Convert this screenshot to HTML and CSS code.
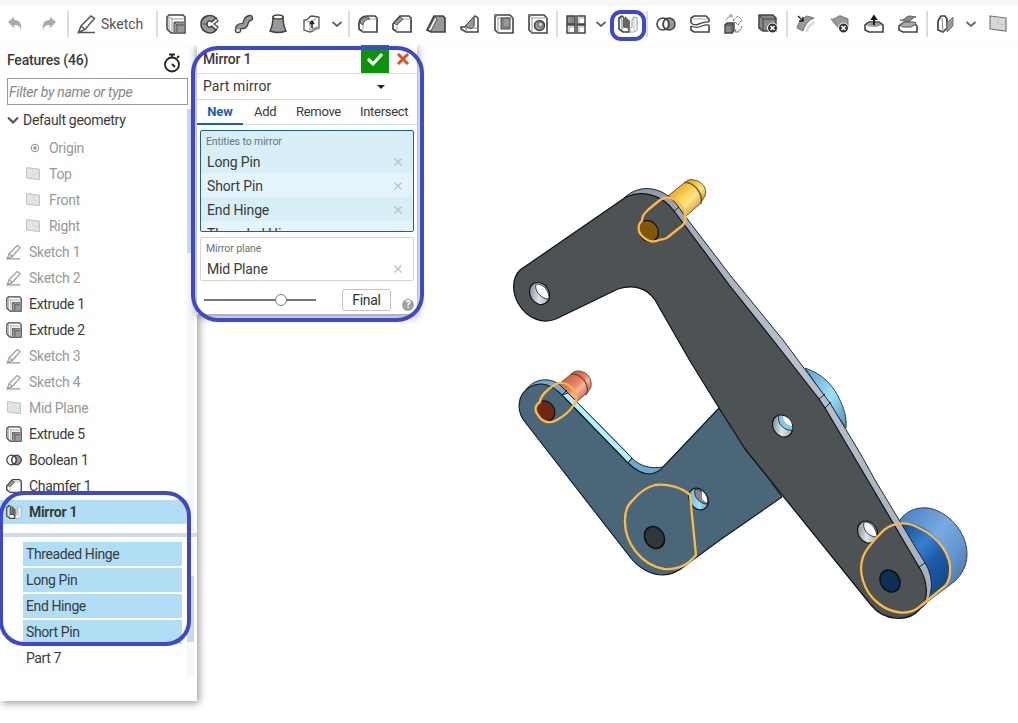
FILE: index.html
```html
<!DOCTYPE html>
<html lang="en">
<head>
<meta charset="utf-8">
<title>Part Studio</title>
<link rel="stylesheet" href="styles.css">
</head>
<body>
<svg class="defs" aria-hidden="true">
  <defs>
    <linearGradient id="gold" x1="0" y1="0" x2="1" y2="1"><stop offset=".1" stop-color="#d99a22"/><stop offset=".45" stop-color="#ffd458"/><stop offset=".6" stop-color="#ffe38a"/><stop offset=".9" stop-color="#c98f20"/></linearGradient>
    <linearGradient id="coral" x1="0" y1="0" x2="1" y2="1"><stop offset=".1" stop-color="#b95c42"/><stop offset=".5" stop-color="#ec886b"/><stop offset=".62" stop-color="#ffb49c"/><stop offset=".9" stop-color="#b55a42"/></linearGradient>
    <linearGradient id="blue" x1="0" y1="0" x2="1" y2="1"><stop offset="0" stop-color="#477dbd"/><stop offset=".42" stop-color="#78a9e2"/><stop offset=".65" stop-color="#6496d0"/><stop offset="1" stop-color="#3e6595"/></linearGradient>
    <linearGradient id="deep" x1="0" y1="0" x2=".7" y2="1"><stop offset="0" stop-color="#134a8d"/><stop offset=".4" stop-color="#377fce"/><stop offset=".65" stop-color="#1c5ca8"/><stop offset="1" stop-color="#134a86"/></linearGradient>
    <linearGradient id="cyan" x1="0" y1="0" x2="1" y2="1"><stop offset="0" stop-color="#5a9cc8"/><stop offset=".55" stop-color="#9be3fb"/><stop offset="1" stop-color="#508bb4"/></linearGradient>
    <linearGradient id="steel" x1="0" y1="0" x2="1" y2="1"><stop offset="0" stop-color="#667078"/><stop offset=".5" stop-color="#dbe3ec"/><stop offset="1" stop-color="#8c98a5"/></linearGradient>
    <linearGradient id="edge" x1="0" y1="0" x2="0" y2="1"><stop offset="0" stop-color="#8f9aa6"/><stop offset=".08" stop-color="#a2adb9"/><stop offset=".4" stop-color="#b8c1cc"/><stop offset="1" stop-color="#a4afbb"/></linearGradient>
    <symbol id="i-extrude" viewBox="0 0 20 20"><path d="M1 3 3 1h14l2 2v16H5l-4-4z" fill="#fff"/><path d="M8 8h10v10H8z" fill="#999"/><path d="M6 5v13M3 3v14M3 3l3 2h13" stroke="#999"/><path d="M8 18V8h10M8 8l3 3v7M11 11h7" stroke="#555"/><path d="M1 3 3 1h14l2 2v16H5l-4-4z" stroke="#444" stroke-width="1.500"/></symbol>
    <symbol id="i-sketch" viewBox="0 0 20 20"><path d="M1.500 18.500 4 12 14 2l3.500 2.500L8 15.500zM4 12l4 3.500M2 18.500h16" stroke="currentColor" stroke-width="1.500"/></symbol>
    <symbol id="i-plane" viewBox="0 0 20 20"><path d="m2 2 16 2v13L2 15z" fill="#d8d8d8" stroke="currentColor" stroke-width="1.200"/><path d="M10 3v7l8 1" stroke="#c4c4c4"/></symbol>
    <symbol id="i-bool" viewBox="0 0 20 20"><circle cx="13" cy="10" r="6" fill="#999" stroke="#444" stroke-width="1.600"/><circle cx="7" cy="10" r="6" stroke="#444" stroke-width="1.600"/><path d="M10 5a6 6 0 0 1 0 10 6 6 0 0 1 0-10" fill="#fff" stroke="#444" stroke-width="1.400"/></symbol>
    <symbol id="i-chamfer" viewBox="0 0 20 20"><path d="M1 10 8 2h9l2 2v14H5l-4-3z" fill="#fff" stroke="#444" stroke-width="1.700"/><path d="m2 9 6-6 3 2-6 6z" fill="#999" stroke="#555"/><path d="M5 11v7M11 5h8" stroke="#aaa"/></symbol>
    <symbol id="i-mirror" viewBox="0 0 20 20"><path d="M1 4 4 2l2 2v9h3l2 2v3H5l-4-3z" fill="#fff" stroke="#444" stroke-width="1.600"/><path d="M4 5v12M1 4l3 1" stroke="#777"/><path d="m7 2 5 5v9l-5-4z" fill="#666"/><path d="M14 13V6l2-3 3 1v12l-3 2h-4v-4z" fill="#fff" stroke="#aaa" stroke-width="1.200"/><path d="M16 5v11" stroke="#bbb"/></symbol>
    <symbol id="i-chev" viewBox="0 0 14 14"><path d="m2.500 5 4.500 4 4.500-4" stroke="#666" stroke-width="1.800"/></symbol>
    <symbol id="i-x" viewBox="0 0 10 10"><path d="m1.500 1.500 7 7M8.500 1.500l-7 7" stroke="#b9c1c5" stroke-width="1.200"/></symbol>
  </defs>
</svg>

<svg class="viewport" viewBox="0 0 1018 723" stroke-linejoin="round" role="img" aria-label="Clamp model">
  <!-- pins and roller behind the plates -->
  <g stroke="#564923" stroke-width=".9">
    <path d="M684 184q4-6 10-4c8 1 14 9 11 16l-5 8z" fill="url(#gold)"/>
    <path d="m668 196 16-13c9-2 20 9 17 20l-15 13z" fill="url(#gold)"/>
    <path d="M684 182c9 0 19 11 17 22"/>
  </g>
  <g stroke="#704437" stroke-width=".9">
    <path d="M571 374q5-5 12-2c6 2 9 8 8 15l-5 8z" fill="url(#coral)"/>
    <path d="m558 385 12-10c9-4 20 7 17 18l-12 10z" fill="url(#coral)"/>
    <path d="M571 374c9 0 18 9 16 19"/>
  </g>
  <path d="M899 521c8-11 18-14 29-13 20 3 39 24 39 46 0 12-5 20-12 27l-28 21z" fill="url(#blue)" stroke="#374556"/>
  <path d="M900 523c14-2 30 6 39 18 11 14 14 30 8 42l-16 14z" fill="url(#deep)"/>
  <path d="M805 368c18 6 27 17 33 28 6 12 9 21 8 32z" fill="url(#cyan)" stroke="#27485c"/>

  <!-- lower plate -->
  <path d="M526 390c8-12 24-13 34-5l8 8 64 65c8 9 21 11 31 9l-10 10-35-10-70-71z" fill="#6faacd" stroke="#1b2a33"/>
  <path d="m568 393 64 65-4 5-66-68z" fill="#b3f1ff" stroke="#1b2a33"/>
  <path d="M530 387c11-7 23-1 32 8l66 68c8 8 14 11 22 11 6-1 10-3 13-7l56-59 63 89-62 43-34 25c-7 6-14 10-23 10-11 0-24-6-33-18L525 422c-9-11-8-28 5-35z" fill="#496779" stroke="#12191d" stroke-width="1.100"/>

  <!-- upper plate -->
  <path d="M624 198c17-16 43-12 58 14l48 63 53 65 47 63 30 50 15 27 50 83c9 14 8 32 0 42l-9 7-250-400z" fill="url(#edge)" stroke="#20252a"/>
  <path d="M626 197c18-8 37-1 48 14l3 4 53 71 43 54 46 59 6 9 35 59 59 100c8 13 11 31 1 42-12 14-36 12-49-4L745 449l-26-41-29-47-35-61c-8-12-22-16-37-11l-58 28c-16 9-33 2-42-14-7-13-5-26 2-33z" fill="#4d5255" stroke="#101214" stroke-width="1.200"/>
  <path d="m673 212 6-5M819 399l6-5M825 408l6-6M919 567l6-4M628 463l4-5M562 395l5-5" stroke="#20252a"/>

  <!-- holes -->
  <g stroke="#101214" stroke-width="1.200">
    <ellipse cx="539.500" cy="293.500" rx="9.500" ry="11.500" transform="rotate(-32 539.500 293.500)" fill="url(#steel)"/>
    <path d="M536 284c8-1 14 9 13 15-7 0-15-7-13-15z" fill="#fff" stroke-width=".8"/>
    <ellipse cx="782.500" cy="426" rx="9.500" ry="11.500" transform="rotate(-32 782.500 426)" fill="url(#steel)"/>
    <path d="M779 415c7-1 14 8 14 15-8 2-17-7-14-15z" fill="#82c9e8" stroke-width=".8"/>
    <path d="M783 416c6 1 9 6 9 10-6-1-9-5-9-10z" fill="#fff" stroke="none"/>
    <ellipse cx="698.500" cy="499" rx="9" ry="11.500" transform="rotate(-32 698.500 499)" fill="url(#cyan)"/>
    <path d="M695 489c7 0 13 8 12 15-7 0-14-7-12-15z" fill="#85868d" stroke-width=".8"/><path d="M702 491v8l5 4q1-7-5-12z" fill="#fff" stroke="none"/>
    <ellipse cx="867.500" cy="532" rx="9.500" ry="11.500" transform="rotate(-32 867.500 532)" fill="url(#steel)"/>
    <path d="M864 522c7-1 13 8 13 15-8 0-15-7-13-15z" fill="#fff" stroke-width=".8"/>
    <ellipse cx="648.500" cy="231" rx="9.500" ry="11" transform="rotate(-32 648.500 231)" fill="#805908"/>
    <ellipse cx="545.500" cy="411" rx="9" ry="10.500" transform="rotate(-32 545.500 411)" fill="#6d2712"/>
    <ellipse cx="654.500" cy="537.500" rx="9.500" ry="11.500" transform="rotate(-32 654.500 537.500)" fill="#30363a" stroke-width="1.600"/>
    <ellipse cx="890" cy="581" rx="9.500" ry="11.500" transform="rotate(-32 890 581)" fill="#0d2e57" stroke-width="1.600"/>
  </g>

  <!-- selection outlines -->
  <g stroke="#ffb943" stroke-width="2.300">
    <path d="M642 221c0-6 3-8 7-12l11-9c7-5 16-2 22 7 4 7 5 13 1 18l-15 12c-3 3-6 2-9 3-6 3-12 1-17-4-5-5-4-12 0-15z"/>
    <path d="M540 402c0-5 4-9 9-13 7-7 15-8 22-2 5 4 7 11 4 16-4 7-12 14-20 18-7 3-14 0-17-6-4-5-3-10 2-13z"/>
    <path d="M655 485c12-2 28 3 35 10l6 60c-7 9-18 15-32 14-23-4-40-27-39-49 0-8 3-16 8-20q10-12 22-15z"/>
    <path d="M880 534c9-11 25-14 39-6 20 9 33 28 31 45q-1 9-5 13l-27 22c-11 8-28 5-40-5-15-12-20-32-15-46 3-9 10-15 17-23z"/>
  </g>
</svg>

<header class="toolbar">
  <div class="group first">
    <svg class="icon" viewBox="0 0 20 20"><path d="m3 8 6-5v3c6 0 8 4 7 10-1-4-3-5-7-5v3z" fill="#aaa"/></svg>
    <svg class="icon" viewBox="0 0 20 20"><path d="m17 8-6-5v3c-6 0-8 4-7 10 1-4 3-5 7-5v3z" fill="#aaa"/></svg>
  </div>
  <div class="group sketch"><svg class="icon"><use href="#i-sketch"/></svg><span>Sketch</span></div>
  <div class="group">
    <svg class="icon"><use href="#i-extrude"/></svg>
    <svg class="icon" viewBox="0 0 20 20"><path d="M16 4C11-1 1 2 1 10s10 12 15 6l-4-4c-3 3-5 0-5-2s2-5 5-2z" fill="#999" stroke="#444" stroke-width="1.600"/><path d="m12 8 4-4 2 3-4 3 4 3-2 3-4-4" fill="#fff" stroke="#444" stroke-width="1.200"/><path d="M3 10h3" stroke="#444"/></svg>
    <svg class="icon" viewBox="0 0 20 20"><path d="M4 16c0-4 2-4 5-4 4 0 1-7 7-8" stroke="#444" stroke-width="6.500" stroke-linecap="round"/><path d="M4 16c0-4 2-4 5-4 4 0 1-7 7-8" stroke="#999" stroke-width="3.800" stroke-linecap="round"/><ellipse cx="4" cy="16.500" rx="2" ry="1.300" fill="#ddd"/></svg>
    <svg class="icon" viewBox="0 0 20 20"><path d="M5 3c0 6-1 10-3 14q8 3 16 0C16 13 15 9 15 3z" fill="#999" stroke="#444" stroke-width="1.500"/><ellipse cx="10" cy="3" rx="5" ry="2" fill="#fff" stroke="#444" stroke-width="1.500"/></svg>
    <svg class="icon" viewBox="0 0 20 20"><path d="M2 6c5 1 4-4 8-4l7 1v11c-5 1-5 4-9 4l-6-2z" fill="#fff" stroke="#555" stroke-width="1.300"/><path d="m2 6 6 2v10M8 8c4 0 5-4 9-5" stroke="#777" stroke-dasharray="3 1"/><path d="m9 17 1-3 7-2v2l-5 3z" fill="#999"/><path d="M10 14V8M8 10l2-3 2 3" stroke="#222" stroke-width="1.500"/></svg>
    <svg class="chev"><use href="#i-chev"/></svg>
  </div>
  <div class="group">
    <svg class="icon" viewBox="0 0 20 20"><path d="M1 9q1-7 8-7h8l2 2v14H5l-4-3z" fill="#fff" stroke="#444" stroke-width="1.700"/><path d="M2 9q1-6 8-6l2 2q-6 0-7 6z" fill="#999" stroke="#555"/><path d="M5 11v7M12 5h7" stroke="#aaa"/></svg>
    <svg class="icon"><use href="#i-chamfer"/></svg>
    <svg class="icon" viewBox="0 0 20 20"><path d="m1 16 7-14h9l2 2v14H5z" fill="#999" stroke="#444" stroke-width="1.700"/><path d="m2 16 7-13 2 2-6 12z" fill="#eee" stroke="#555"/></svg>
    <svg class="icon" viewBox="0 0 20 20"><path d="M1 13h4L15 2l3 2v14H6l-5-3z" fill="#fff" stroke="#444" stroke-width="1.500"/><path d="m5 12 9-9v9l-3 3z" fill="#999" stroke="#444"/><path d="M6 18v-4h11M14 12V3" stroke="#777"/></svg>
    <svg class="icon" viewBox="0 0 20 20"><path d="M1 1h15l3 3v15H4l-3-3z" fill="#fff" stroke="#444" stroke-width="1.600"/><path d="M4 4h15M4 4v15M1 1l3 3" stroke="#999"/><path d="M7 4h9v11H7z" fill="#999" stroke="#444"/><path d="M9 5v8h7" stroke="#666"/></svg>
    <svg class="icon" viewBox="0 0 20 20"><path d="M1 1h15l3 3v15H4l-3-3z" fill="#fff" stroke="#444" stroke-width="1.600"/><path d="M4 4h15M4 4v15M1 1l3 3" stroke="#999"/><circle cx="11.500" cy="11.500" r="5" fill="#999" stroke="#444" stroke-width="1.500"/><circle cx="12.500" cy="10.500" r="2.500" fill="#ccc" stroke="#555"/></svg>
  </div>
  <div class="group">
    <svg class="icon" viewBox="0 0 20 20"><g stroke="#444" stroke-width="1.500"><path d="M1 2h8v8H1z" fill="#888"/><path d="M11 2h8v8h-8zM1 11h8v8H1zM11 11h8v8h-8z" fill="#fff"/></g><path d="M3 4v5M3 13v5M13 4v5M13 13v5M3 13h5M13 4h5M13 13h5" stroke="#aaa"/></svg>
    <svg class="chev"><use href="#i-chev"/></svg>
    <span class="marked"><svg class="icon"><use href="#i-mirror"/></svg><i class="callout small"></i></span>
  </div>
  <div class="group">
    <svg class="icon"><use href="#i-bool"/></svg>
    <svg class="icon" viewBox="0 0 20 20"><path d="M1 9V4l3-2h12l3 3v3M1 12v4l3 2h15v-7" stroke="#444" stroke-width="1.600"/><path d="M1 9c6 5 9-2 18-1M1 12l3 1c6 2 8-3 15-2" stroke="#444" stroke-width="1.200"/><path d="M3 5h15" stroke="#aaa"/></svg>
    <svg class="icon" viewBox="0 0 20 20"><path d="M1 11 3 9h7v8l-2 2H1z" fill="#888" stroke="#444" stroke-width="1.400"/><path d="M1 11h7v8M8 11l2-2" stroke="#444"/><path d="m9 6 5-4 4 4-4 5z" fill="#fff" stroke="#777" stroke-dasharray="3 1"/><path d="M2 6q1-3 5-4M5 1h3v3M18 12q0 4-5 6M12 15l-1 3h4" stroke="#888"/></svg>
    <svg class="icon" viewBox="0 0 20 20"><path d="M1 1h14l3 3v13H5l-4-3z" fill="#888" stroke="#444" stroke-width="1.500"/><path d="M5 17V5h13M1 1l4 4" stroke="#444"/><circle cx="14.500" cy="14" r="5" fill="#333" stroke="#fff"/><path d="m12.500 12 4 4m0-4-4 4" stroke="#fff" stroke-width="1.600"/></svg>
  </div>
  <div class="group">
    <svg class="icon" viewBox="0 0 20 20"><path d="M1 14Q3 5 11 2l7 2Q10 7 7 17z" fill="#999" stroke="#777"/><path d="M9 18q2-8 9-11l1 3q-5 1-7 8z" fill="#ddd"/><path d="m2 2 5 5M7 3v4H3" stroke="#222" stroke-width="1.400"/></svg>
    <svg class="icon" viewBox="0 0 20 20"><path d="M1 5c5 1 6-4 10-3l7 3v8l-8 3z" fill="#999" stroke="#777"/><circle cx="13.500" cy="14" r="5" fill="#333" stroke="#fff"/><path d="m11.500 12 4 4m0-4-4 4" stroke="#fff" stroke-width="1.600"/></svg>
    <svg class="icon" viewBox="0 0 20 20"><path d="m1 11 4-3h10l4 3v7H5l-4-2z" fill="#fff" stroke="#444" stroke-width="1.600"/><path d="m2 12 4-3h9l3 2-6 2z" fill="#999"/><path d="M10 11V4M8 5l2-3 2 3z" fill="#111" stroke="#111" stroke-width="1.800"/></svg>
    <svg class="icon" viewBox="0 0 20 20"><path d="m1 12 4-3h11l3 3v6H5l-4-2z" fill="#fff" stroke="#444" stroke-width="1.600"/><path d="M2 6c5 1 5-4 10-4l6 1c-5 1-5 5-8 5z" fill="#888" stroke="#666"/><path d="m2 11 4-3h11l1 2-5 3H5z" fill="#aaa" stroke="#555"/></svg>
  </div>
  <div class="group">
    <svg class="icon" viewBox="0 0 20 20"><path d="m2 7 3-5h4l2 3v9l-4 4-5-2z" fill="#fff" stroke="#444" stroke-width="1.700"/><path d="m6 4 1 14" stroke="#888"/><path d="m11 9 6-6v9l-6 6z" fill="#999" stroke="#777"/></svg>
    <svg class="chev"><use href="#i-chev"/></svg>
    <svg class="icon plane"><use href="#i-plane"/></svg>
  </div>
</header>

<aside class="features">
  <div class="features-head"><h2>Features (46)</h2>
    <svg class="timer" viewBox="0 0 18 20"><circle cx="9" cy="11.500" r="7" stroke="#222" stroke-width="1.800"/><path d="M6 1.500h6M9 2v3M14 5l2-2M9 11l3 3" stroke="#222" stroke-width="1.800"/></svg></div>
  <input class="filter" placeholder="Filter by name or type" aria-label="Filter">
  <div class="tree">
    <div class="row root"><svg viewBox="0 0 14 14"><path d="m2 4.500 5 5 5-5" stroke="#555" stroke-width="2.200"/></svg>Default geometry</div>
    <div class="row sub"><svg viewBox="0 0 16 16"><circle cx="10" cy="8" r="3.800" stroke="#555"/><circle cx="10" cy="8" r="1.700" fill="#555"/></svg>Origin</div>
    <div class="row sub"><svg><use href="#i-plane"/></svg>Top</div>
    <div class="row sub"><svg><use href="#i-plane"/></svg>Front</div>
    <div class="row sub"><svg><use href="#i-plane"/></svg>Right</div>
    <div class="row off"><svg><use href="#i-sketch"/></svg>Sketch 1</div>
    <div class="row off"><svg><use href="#i-sketch"/></svg>Sketch 2</div>
    <div class="row"><svg><use href="#i-extrude"/></svg>Extrude 1</div>
    <div class="row"><svg><use href="#i-extrude"/></svg>Extrude 2</div>
    <div class="row off"><svg><use href="#i-sketch"/></svg>Sketch 3</div>
    <div class="row off"><svg><use href="#i-sketch"/></svg>Sketch 4</div>
    <div class="row off mid"><svg><use href="#i-plane"/></svg>Mid Plane</div>
    <div class="row"><svg><use href="#i-extrude"/></svg>Extrude 5</div>
    <div class="row"><svg><use href="#i-bool"/></svg>Boolean 1</div>
    <div class="row"><svg><use href="#i-chamfer"/></svg>Chamfer 1</div>
    <div class="row active"><svg><use href="#i-mirror"/></svg>Mirror 1</div>
    <i class="thumb"></i>
  </div>
  <div class="splitter"></div>
  <div class="parts">
    <div class="part on">Threaded Hinge</div>
    <div class="part on">Long Pin</div>
    <div class="part on">End Hinge</div>
    <div class="part on">Short Pin</div>
    <div class="part">Part 7</div>
    <i class="thumb"></i>
  </div>
</aside>
<i class="callout list"></i>

<section class="dialog">
  <div class="title"><h3>Mirror 1</h3>
    <button class="ok" aria-label="Accept"><svg viewBox="0 0 28 28"><path d="m7 14 5 5 9-10" stroke="#fff" stroke-width="3.200"/></svg></button>
    <svg class="cancel" viewBox="0 0 14 14"><path d="m2 2 10 10M12 2 2 12" stroke="#e04e22" stroke-width="3"/></svg></div>
  <div class="select"><span>Part mirror</span><i class="caret"></i></div>
  <nav class="tabs"><b>New</b><span>Add</span><span>Remove</span><span>Intersect</span></nav>
  <div class="box entities"><label>Entities to mirror</label>
    <div class="item"><span>Long Pin</span><svg><use href="#i-x"/></svg></div>
    <div class="item"><span>Short Pin</span><svg><use href="#i-x"/></svg></div>
    <div class="item"><span>End Hinge</span><svg><use href="#i-x"/></svg></div>
    <div class="item"><span>Threaded Hinge</span><svg><use href="#i-x"/></svg></div>
  </div>
  <div class="box planebox"><label>Mirror plane</label>
    <div class="item"><span>Mid Plane</span><svg><use href="#i-x"/></svg></div>
  </div>
  <div class="foot"><div class="slider"><i></i></div><button class="final">Final</button><span class="help">?</span></div>
</section>
<i class="callout form"></i>
</body>
</html>
```

FILE: styles.css
```css
* { box-sizing: border-box; }
body {
  margin: 0;
  width: 1018px;
  height: 723px;
  overflow: hidden;
  position: relative;
  background: #fff;
  color: #3a3a3a;
  font: 14px/26px Roboto, "Liberation Sans", sans-serif;
  letter-spacing: -.3px;
}
h2, h3 { margin: 0; font-size: 14px; font-weight: 500; letter-spacing: -.2px; }
svg { display: block; flex: none; fill: none; }
.defs { position: absolute; width: 0; height: 0; }
.viewport { position: absolute; left: 0; top: 0; width: 1018px; height: 723px; }

.toolbar {
  position: relative;
  display: flex;
  align-items: flex-start;
  height: 45px;
  padding-top: 5px;
  border-top: 6px solid #f7f7f7;
  border-bottom: 1px solid #fafafa;
  background: #fff;
}
.group {
  display: flex;
  align-items: center;
  gap: 14px;
  height: 26px;
  padding: 0 8px;
  border-right: 2px solid #ddd;
}
.group:last-child { border: 0; }
.first { padding-left: 5px; width: 69px; }
.sketch { gap: 4px; width: 89px; color: #555; letter-spacing: 0; }
.icon { width: 20px; height: 20px; }
.plane { color: #777; }
.chev { width: 14px; height: 14px; margin: 0 -4px 0 -6px; }
.marked { position: relative; }

.callout {
  position: absolute;
  border: 4px solid #3f48cc;
  border-radius: 25px;
  pointer-events: none;
}
.small { left: -8px; top: -4px; width: 36px; height: 31px; border-radius: 11px; }
.list { left: -1px; top: 491px; width: 192px; height: 155px; }
.form { left: 191px; top: 46px; width: 233px; height: 276px; border-radius: 27px; }

.features {
  position: absolute;
  left: 0;
  top: 45px;
  width: 197px;
  height: 656px;
  background: #fff;
  box-shadow: 2px 2px 8px rgba(0, 0, 0, .4);
  clip-path: inset(0 -16px -16px 0);
}
.features-head { display: flex; justify-content: space-between; height: 33px; padding: 2px 16px 0 7px; }
.timer { width: 18px; height: 20px; margin-top: 6px; }
.filter {
  display: block;
  width: 181px;
  height: 27px;
  margin-left: 7px;
  padding: 0 1px;
  border: 1px solid #999;
  border-radius: 0;
  font: italic 14px Roboto, sans-serif;
  letter-spacing: -.3px;
}
.filter::placeholder { color: #888; }
.tree { position: relative; height: 426px; overflow: hidden; }
.row { display: flex; align-items: center; gap: 7px; height: 26px; padding-left: 6px; }
.row svg { width: 16px; height: 16px; }
.row.root { gap: 3px; height: 28px; margin-bottom: 2px; padding-top: 2px; }
.row.root svg { width: 14px; height: 14px; }
.row.sub { gap: 8px; padding-left: 25px; }
.off, .sub { color: #999; }
.sub svg, .mid svg { opacity: .65; }
.active {
  width: 187px;
  height: 24px;
  margin-top: 1px;
  background: #b1def5;
  font-weight: 700;
}
.tree::after, .parts::after {
  content: "";
  position: absolute;
  right: 3px;
  top: 4px;
  bottom: 0;
  width: 7px;
  background: #f3f8fb;
}
.tree .thumb, .parts .thumb { position: absolute; z-index: 1; right: 3px; width: 7px; background: #ccdae4; }
.tree .thumb { top: 4px; height: 144px; }
.splitter { height: 4px; margin-top: 2px; background: #d0dbe4; }
.parts { position: relative; display: flex; flex-direction: column; gap: 2px; height: 140px; padding: 5px 15px 0 23px; }
.parts .thumb { top: 39px; height: 66px; }
.part { height: 24px; padding-left: 3px; line-height: 25px; letter-spacing: -.4px; }
.on { background: #b1def5; }

.dialog {
  position: absolute;
  left: 197px;
  top: 45px;
  width: 220px;
  height: 269px;
  background: #fff;
  box-shadow: 0 2px 8px rgba(0, 0, 0, .5);
  clip-path: inset(0 -16px -16px -16px);
}
.title { display: flex; align-items: center; height: 29px; padding-left: 6px; border-bottom: 1px solid #ddd; }
.title h3 { width: 158px; }
.ok { width: 28px; height: 28px; padding: 0; border: 0; background: #0b930b; }
.cancel { width: 14px; height: 14px; margin-left: 7px; }
.select { display: flex; align-items: center; justify-content: space-between; width: 194px; height: 26px; padding: 0 6px; border-bottom: 1px solid #ddd; line-height: 24px; letter-spacing: .1px; }
.select span { margin-top: -2px; }
.caret { border: 4px solid transparent; border-top-color: #222; border-bottom: 0; }
.tabs { display: flex; height: 25px; line-height: 24px; border-bottom: 1px solid #ddd; font-size: 13px; }
.tabs b { width: 46px; height: 25px; text-align: center; color: #1a60a8; border-bottom: 2px solid #1a60a8; font-weight: 700; letter-spacing: 0; }
.tabs span { width: 42px; margin-left: 11px; letter-spacing: -.3px; }
.tabs span + span { width: 64px; margin-left: 0; }
.tabs span:last-child { width: 50px; }
.box { width: 214px; margin: 5px 0 0 3px; border: 1px solid #d5d5d5; border-radius: 2px; overflow: hidden; }
.box label { display: block; height: 18px; padding: 2px 5px 0; font-size: 10.5px; line-height: 18px; letter-spacing: -.1px; color: #68747b; }
.item { display: flex; align-items: center; justify-content: space-between; height: 24px; padding: 1px 10px 0 6px; letter-spacing: -.15px; }
.item svg { width: 10px; height: 10px; }
.entities { height: 102px; border-color: #1a60a8; background: #d9eff8; }
.entities .item:nth-child(odd) { background: #e4f4fc; }
.planebox { height: 44px; }
.foot { position: relative; display: flex; align-items: center; height: 38px; padding-left: 7px; }
.slider { display: flex; align-items: center; width: 112px; height: 2px; background: #777; }
.slider i { width: 12px; height: 12px; margin-left: 71px; border: 1px solid #777; border-radius: 50%; background: #fff; }
.final { width: 49px; height: 22px; margin-left: 26px; padding: 0; border: 1px solid #c4c4c4; border-radius: 3px; background: #fff; color: #333; font: 14px Roboto, sans-serif; letter-spacing: -.3px; }
.help { width: 12px; height: 12px; margin: 10px 0 0 11px; border-radius: 50%; background: #9da3a8; color: #fff; font: bold 10px/12px Roboto, sans-serif; text-align: center; }
```
